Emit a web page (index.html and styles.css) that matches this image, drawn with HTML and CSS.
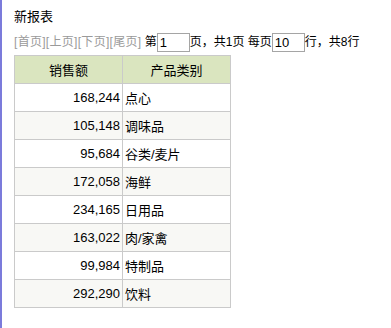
FILE: index.html
```html
<!DOCTYPE html>
<html>
<head>
<meta charset="utf-8">
<link rel="stylesheet" href="styles.css">
</head>
<body>
<div class="page">
  <div class="title">新报表</div>
  <div class="pager">
    <span class="nav">[首页][上页][下页][尾页]</span>
    <span class="txt">&nbsp;第</span><input class="box" type="text" value="1"><span class="txt">页，共1页 每页</span><input class="box" type="text" value="10"><span class="txt">行，共8行</span>
  </div>
  <table class="report">
    <thead>
      <tr><th>销售额</th><th>产品类别</th></tr>
    </thead>
    <tbody>
      <tr><td class="num">168,244</td><td>点心</td></tr>
      <tr><td class="num">105,148</td><td>调味品</td></tr>
      <tr><td class="num">95,684</td><td>谷类/麦片</td></tr>
      <tr><td class="num">172,058</td><td>海鲜</td></tr>
      <tr><td class="num">234,165</td><td>日用品</td></tr>
      <tr><td class="num">163,022</td><td>肉/家禽</td></tr>
      <tr><td class="num">99,984</td><td>特制品</td></tr>
      <tr><td class="num">292,290</td><td>饮料</td></tr>
    </tbody>
  </table>
</div>
</body>
</html>
```
FILE: styles.css
```css
html, body {
  margin: 0;
  padding: 0;
  background: #fff;
}
body {
  font-family: "Liberation Sans", "Noto Sans CJK SC", sans-serif;
  font-size: 12px;
  color: #000;
}
.page {
  border-left: 2px solid #7b7bdb;
  min-height: 100vh;
  box-sizing: border-box;
  padding: 8px 0 0 12px;
}
.title {
  font-size: 13px;
  line-height: 18px;
  height: 18px;
}
.pager {
  margin-top: 6px;
  height: 20px;
  display: flex;
  align-items: center;
  white-space: nowrap;
  line-height: 20px;
}
.nav {
  color: #9a9a9a;
  letter-spacing: 0.3px;
}
.box {
  box-sizing: border-box;
  width: 33px;
  height: 19px;
  margin: 0;
  padding: 0 0 0 2px;
  border: 1px solid #a5a5a5;
  font-family: "Liberation Sans", sans-serif;
  font-size: 13px;
  line-height: 17px;
  color: #000;
  background: #fff;
  outline: none;
}
.report {
  margin-top: 3px;
  border-collapse: collapse;
  table-layout: fixed;
  width: 217px;
  font-size: 13px;
}
.report tr {
  height: 28px;
}
.report th, .report td {
  border: 1px solid #cacaca;
  padding: 0 2px;
  width: 50%;
}
.report th {
  background: #dae5bf;
  font-weight: normal;
  text-align: center;
}
.report td {
  text-align: left;
}
.report td.num {
  text-align: right;
}
.report tbody tr:nth-child(even) td {
  background: #f8f8f5;
}
```
